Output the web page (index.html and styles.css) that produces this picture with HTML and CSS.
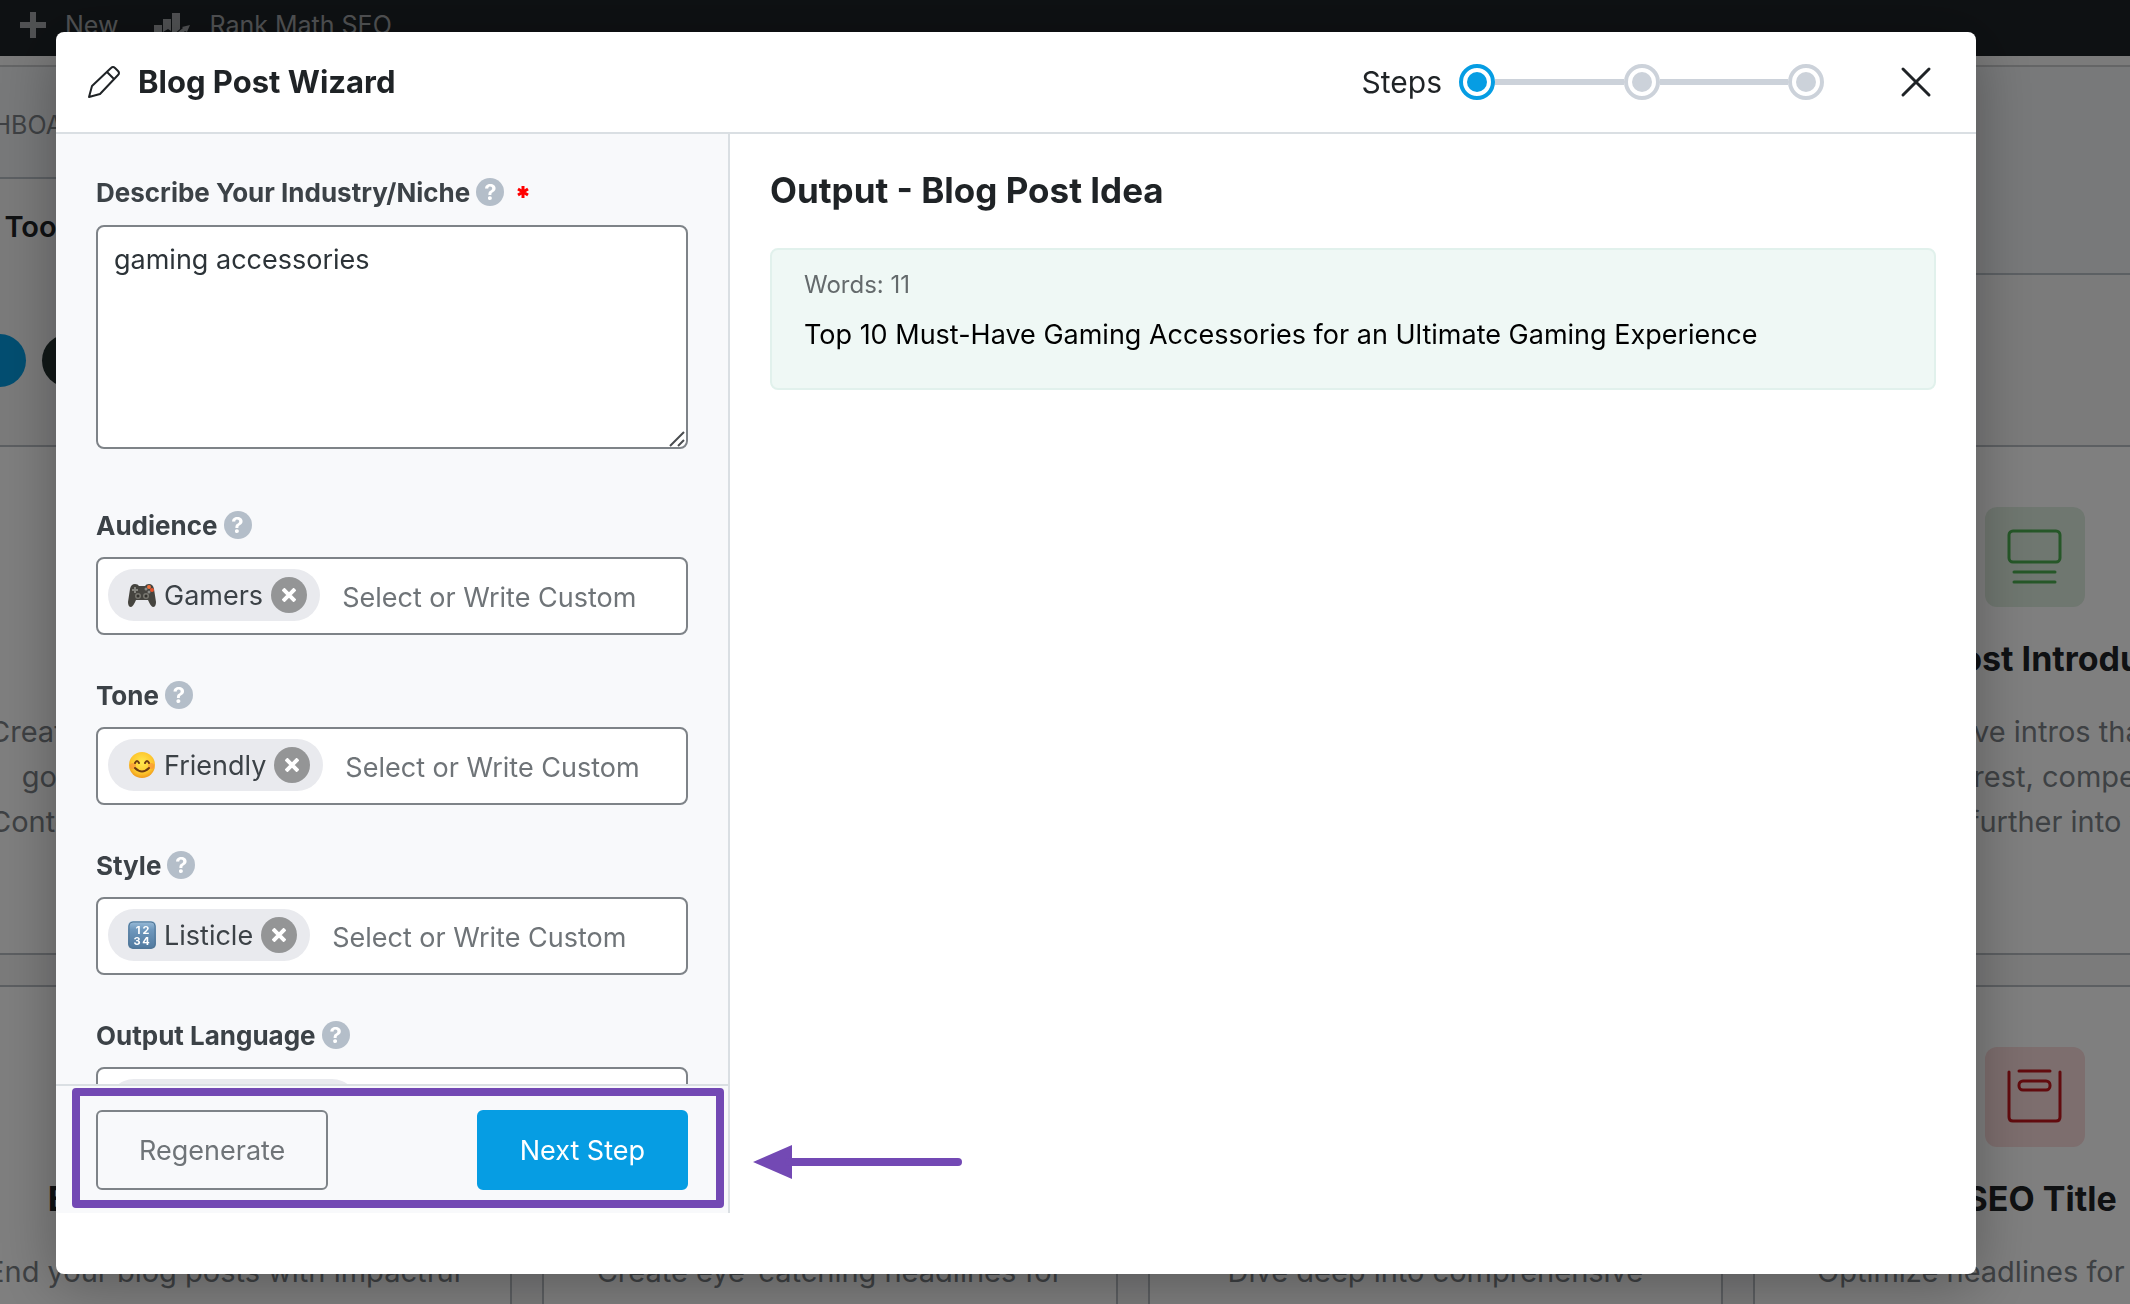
FILE: index.html
```html
<!DOCTYPE html>
<html lang="en">
<head>
<meta charset="utf-8">
<title>Blog Post Wizard</title>
<link rel="stylesheet" href="styles.css">
</head>
<body>
<div class="page">
  <nav class="adminbar">
    <a class="adminbar-link" href="#">
      <svg width="26" height="26" viewBox="0 0 26 26"><path d="M10 0h6v10h10v6H16v10h-6V16H0v-6h10z" fill="#a2a5a8"/></svg>
      New
    </a>
    <a class="adminbar-link" href="#">
      <svg width="36" height="30" viewBox="0 0 36 30"><path d="M0 15h8v7l-5 4H0zM9 9h8v12l-3-2-5 3zM18 3h8v16l-8 7zM28 17l8-2-3 7-2-1-10 9H0v-3h18l11-9z" fill="#a2a5a8"/></svg>
      Rank Math SEO
    </a>
  </nav>
  <header class="masthead">
    <div class="masthead-main">
      <nav class="tabs"><a class="tab" href="#">DASHBOARD</a></nav>
      <div class="toolbar">
        <h2 class="toolbar-title">AI Tools</h2>
        <div class="filters">
          <button class="filter filter-on" type="button">All</button>
          <button class="filter" type="button">SEO</button>
        </div>
      </div>
    </div>
    <div class="masthead-side"></div>
  </header>
  <main class="cards">
    <article class="card">
      <div class="card-icon"></div>
      <h3 class="card-title">Blog Post</h3>
      <p class="card-text">Create complete blog posts in one<br>go. Share a few details so the<br>Content Wizard can do the writing</p>
    </article>
    <article class="card"></article>
    <article class="card"></article>
    <article class="card">
      <div class="card-icon card-icon-green">
        <svg width="56" height="56" viewBox="0 0 56 56" fill="none" stroke="#4caf50" stroke-width="3" stroke-linecap="round"><rect x="2" y="2" width="51" height="31" rx="4"/><path d="M7 43h41M7 53h41"/></svg>
      </div>
      <h3 class="card-title">Blog Post Introduction</h3>
      <p class="card-text">Attractive intros that win<br>any interest, compelling it<br>them further into your</p>
    </article>
    <article class="card">
      <div class="card-icon"></div>
      <h3 class="card-title">Blog Post Conclusion</h3>
      <p class="card-text">End your blog posts with impactful</p>
    </article>
    <article class="card">
      <div class="card-icon"></div>
      <h3 class="card-title">Post Title</h3>
      <p class="card-text">Create eye-catching headlines for</p>
    </article>
    <article class="card">
      <div class="card-icon"></div>
      <h3 class="card-title">Topic Research</h3>
      <p class="card-text">Dive deep into comprehensive</p>
    </article>
    <article class="card">
      <div class="card-icon card-icon-red">
        <svg width="56" height="56" viewBox="0 0 56 56" fill="none" stroke="#c4161c" stroke-width="3" stroke-linecap="round"><path d="M2 3v45q0 4 4 4h43q4 0 4-4V3M12 2h31"/><rect x="12" y="12" width="31" height="9" rx="4"/></svg>
      </div>
      <h3 class="card-title">SEO Title</h3>
      <p class="card-text">Optimize headlines for maximum</p>
    </article>
  </main>
</div>

<div class="overlay">
  <section class="modal" role="dialog" aria-labelledby="modal-title">
    <header class="modal-header">
      <svg class="pencil" width="34" height="34" viewBox="0 0 34 34" fill="none" stroke="#1f2326" stroke-width="2" stroke-linejoin="round"><path d="M2 32l3-11L24 3q2-2 4 0l3 3q2 2 0 4L13 29zM20 7l7 7"/></svg>
      <h1 class="modal-title" id="modal-title">Blog Post Wizard</h1>
      <span class="steps-label">Steps</span>
      <div class="steps">
        <span class="step step-on"></span><span class="step-line"></span><span class="step"></span><span class="step-line"></span><span class="step"></span>
      </div>
      <button class="close" type="button" aria-label="Close">
        <svg width="32" height="32" viewBox="0 0 32 32" stroke="#1f2326" stroke-width="3" stroke-linecap="round"><path d="M3 3l26 26M29 3L3 29"/></svg>
      </button>
    </header>
    <div class="modal-body">
      <form class="sidebar">
        <div class="fields">
          <div class="field field-long">
            <div class="field-head"><label for="niche">Describe Your Industry/Niche</label><span class="help">?</span><svg class="required" width="12" height="12" viewBox="0 0 12 12" stroke="#f00" stroke-width="3"><path d="M6 0v12M1 3l10 6M11 3L1 9"/></svg></div>
            <div class="area-wrap">
              <textarea class="area" id="niche">gaming accessories</textarea>
              <svg class="grip" width="16" height="16" viewBox="0 0 16 16" stroke="#4a4d50" stroke-width="2"><path d="M1 15L15 1M9 15l6-6"/></svg>
            </div>
          </div>
          <div class="field">
            <div class="field-head"><label for="audience">Audience</label><span class="help">?</span></div>
            <div class="picker">
              <span class="chip">
                <svg width="28" height="28" viewBox="0 0 28 28"><path d="M7 3Q10 3 11 5h6q1-2 4-2 4 0 5 5l2 13q0 5-3 5-2 0-5-7H8q-3 7-5 7-3 0-3-5L2 8q1-5 5-5z" fill="#45443f"/><path d="M7 6v6M4 9h6" stroke="#85857f" stroke-width="2"/><circle cx="10" cy="15" r="3" fill="#77766f"/><circle cx="18" cy="15" r="3" fill="#77766f"/><circle cx="10" cy="15" r="1.500" fill="#33322e"/><circle cx="18" cy="15" r="1.500" fill="#33322e"/><circle cx="21" cy="6" r="2" fill="#f0703a"/><circle cx="24" cy="9" r="2" fill="#e5532d"/><circle cx="21" cy="11" r="1.500" fill="#8a8a86"/><circle cx="18" cy="8" r="1.500" fill="#8a8a86"/></svg>
                Gamers
                <button class="chip-x" type="button" aria-label="Remove Gamers"><svg width="14" height="14" viewBox="0 0 14 14"><path d="M1 1l12 12M13 1L1 13" stroke="#fff" stroke-width="4"/></svg></button>
              </span>
              <input class="picker-input" id="audience" type="text" placeholder="Select or Write Custom">
            </div>
          </div>
          <div class="field">
            <div class="field-head"><label for="tone">Tone</label><span class="help">?</span></div>
            <div class="picker">
              <span class="chip">
                <svg width="28" height="28" viewBox="0 0 28 28"><defs><radialGradient id="face" cx=".5" cy=".4" r=".6"><stop offset="0" stop-color="#ffe94e"/><stop offset=".7" stop-color="#fdc62d"/><stop offset="1" stop-color="#f09a1c"/></radialGradient></defs><circle cx="14" cy="14" r="13" fill="url(#face)"/><circle cx="5" cy="15" r="3" fill="#f9823b" opacity=".5"/><circle cx="23" cy="15" r="3" fill="#f9823b" opacity=".5"/><path d="M7 12q2-4 4 0M17 12q2-4 4 0M7 17q7 7 14 0" fill="none" stroke="#6d3a12" stroke-width="2" stroke-linecap="round"/></svg>
                Friendly
                <button class="chip-x" type="button" aria-label="Remove Friendly"><svg width="14" height="14" viewBox="0 0 14 14"><path d="M1 1l12 12M13 1L1 13" stroke="#fff" stroke-width="4"/></svg></button>
              </span>
              <input class="picker-input" id="tone" type="text" placeholder="Select or Write Custom">
            </div>
          </div>
          <div class="field">
            <div class="field-head"><label for="style">Style</label><span class="help">?</span></div>
            <div class="picker">
              <span class="chip">
                <svg class="numbers" width="28" height="28" viewBox="0 0 28 28"><defs><linearGradient id="tile" x2="0" y2="1"><stop offset="0" stop-color="#9dbfdb"/><stop offset=".3" stop-color="#6f98bd"/><stop offset="1" stop-color="#4f789e"/></linearGradient></defs><rect width="28" height="28" rx="5" fill="url(#tile)"/><rect x="1" y="1" width="26" height="26" rx="4" fill="none" stroke="#527796" stroke-width="1"/><text x="10" y="13">1</text><text x="18" y="13">2</text><text x="9" y="24">3</text><text x="18" y="24">4</text></svg>
                Listicle
                <button class="chip-x" type="button" aria-label="Remove Listicle"><svg width="14" height="14" viewBox="0 0 14 14"><path d="M1 1l12 12M13 1L1 13" stroke="#fff" stroke-width="4"/></svg></button>
              </span>
              <input class="picker-input" id="style" type="text" placeholder="Select or Write Custom">
            </div>
          </div>
          <div class="field">
            <div class="field-head"><label for="language">Output Language</label><span class="help">?</span></div>
            <div class="picker">
              <span class="chip">
                <svg width="28" height="28" viewBox="0 0 28 28"><rect y="5" width="28" height="18" fill="#c8444c"/><rect y="5" width="13" height="10" fill="#3c4f8a"/></svg>
                US English
                <button class="chip-x" type="button" aria-label="Remove US English"></button>
              </span>
              <input class="picker-input" id="language" type="text">
            </div>
          </div>
        </div>
        <footer class="actions">
          <button class="btn btn-outline" type="button">Regenerate</button>
          <button class="btn btn-primary" type="button">Next Step</button>
          <div class="highlight"></div>
          <svg class="arrow" width="210" height="34" viewBox="0 0 210 34"><path d="M0 17L39 0v34z" fill="#7349b4"/><path d="M36 17h169" stroke="#7349b4" stroke-width="8" stroke-linecap="round"/></svg>
        </footer>
      </form>
      <section class="output">
        <h2 class="output-title">Output - Blog Post Idea</h2>
        <div class="result">
          <p class="result-words">Words: 11</p>
          <p class="result-text">Top 10 Must-Have Gaming Accessories for an Ultimate Gaming Experience</p>
        </div>
      </section>
    </div>
  </section>
</div>
</body>
</html>
```
FILE: styles.css
```css
* { box-sizing: border-box; }
html, body { height: 100%; }
body {
  margin: 0;
  overflow: hidden;
  font-family: Inter, "Liberation Sans", sans-serif;
  color: #1f2326;
  background: #f6f6f7;
}
h1, h2, h3, p { margin: 0; }
button, input, textarea { font-family: inherit; }
svg { display: block; flex: none; }

/* Page behind the dialog; it runs past both sides of the window */
.page { margin: 0 -199px 0 -64px; }
.adminbar {
  display: flex;
  gap: 36px;
  height: 56px;
  padding: 6px 84px;
  background: #1d2327;
}
.adminbar-link {
  display: flex;
  gap: 19px;
  align-items: center;
  height: 38px;
  font-size: 25px;
  color: #a2a5a8;
  text-decoration: none;
}
.masthead {
  display: flex;
  height: 389px;
  padding-top: 9px;
}
.masthead-main { width: 50%; border-top: 2px solid #c9cbcd; }
.masthead-side {
  flex: 1;
  height: 210px;
  border-top: 2px solid #c9cbcd;
  border-bottom: 2px solid #b9c0c7;
  background: #f0f2f4;
}
.tabs {
  height: 112px;
  padding: 40px 0 0 6px;
  border-bottom: 2px solid #b9c0c7;
  background: #f0f2f4;
}
.tab { font-size: 25px; line-height: 36px; color: #7d8388; text-decoration: none; }
.toolbar { padding: 28px 0 0 32px; }
.toolbar-title { font-size: 29px; font-weight: 600; line-height: 40px; }
.filters { display: flex; gap: 16px; padding-top: 87px; }
.filter {
  width: 120px;
  height: 53px;
  border: 0;
  border-radius: 27px;
  font-size: 24px;
  color: #fff;
  background: #23302f;
}
.filter-on { width: 58px; padding: 0 28px 0 0; background: #069de3; }

.cards {
  display: grid;
  grid-template-columns: repeat(4, 1fr);
  grid-auto-rows: 510px;
  gap: 30px;
}
.card {
  padding: 60px 20px 0;
  border: 2px solid #b9bec4;
  background: #fff;
  text-align: center;
}
.card-icon {
  display: flex;
  align-items: center;
  justify-content: center;
  width: 112px;
  height: 100px;
  margin: 0 auto;
  border-right: 12px solid #fff;
}
.card-icon svg {
  box-sizing: content-box;
  padding: 22px;
  border-radius: 12px;
}
.card-icon-green svg { background: #dfeee0; }
.card-icon-red svg { background: #fbdcdc; }
.card-title { margin-top: 30px; font-size: 34px; font-weight: 650; line-height: 44px; }
.card-text { margin-top: 28px; font-size: 29px; line-height: 45px; color: #7d8388; }

/* Dialog */
.overlay {
  position: fixed;
  inset: 0;
  display: flex;
  padding: 32px 154px 30px 56px;
  background: rgba(0, 0, 0, .5);
}
.modal {
  flex: 1;
  display: flex;
  flex-direction: column;
  min-width: 0;
  padding-bottom: 61px;
  border-radius: 8px;
  background: #fff;
  box-shadow: 0 10px 60px rgba(0, 0, 0, .3);
}
.modal-header {
  display: flex;
  align-items: center;
  height: 102px;
  padding: 0 44px 0 31px;
  border-bottom: 2px solid #dadfe3;
}
.modal-title { margin-left: 17px; font-size: 31px; font-weight: 650; line-height: 40px; }
.steps-label { margin-left: auto; font-size: 30px; line-height: 40px; }
.steps { display: flex; align-items: center; width: 365px; margin: 0 76px 0 17px; }
.step {
  width: 36px;
  height: 36px;
  border: 4px solid #ccd2da;
  border-radius: 50%;
  background: #ccd2da content-box;
  padding: 4px;
}
.step-on { border-color: #069de3; background-color: #069de3; }
.step-line { flex: 1; height: 6px; background: #ccd2da; }
.close { padding: 0; border: 0; background: none; }

.modal-body { flex: 1; display: flex; min-height: 0; }
.sidebar {
  flex: none;
  display: flex;
  flex-direction: column;
  width: 674px;
  border-right: 2px solid #dadfe3;
  background: #f8f9fb;
}
.fields { flex: 1; min-height: 0; overflow: hidden; padding: 40px 40px 0; }
.field { padding-bottom: 42px; }
.field-long { padding-bottom: 58px; }
.field-long .field-head { margin-bottom: 15px; }
.field-head {
  display: flex;
  align-items: center;
  height: 36px;
  margin-bottom: 14px;
  font-size: 26px;
  font-weight: 650;
  color: #3c4247;
}
.help {
  width: 28px;
  height: 28px;
  margin-left: 6px;
  border-radius: 50%;
  font-size: 22px;
  font-weight: 700;
  line-height: 28px;
  text-align: center;
  color: #fff;
  background: #b4bec9;
}
.required { margin-left: 13px; }
.area-wrap { position: relative; }
.area {
  display: block;
  width: 100%;
  height: 224px;
  padding: 15px 16px;
  border: 2px solid #7e8388;
  border-radius: 8px;
  font-size: 27px;
  line-height: 36px;
  color: #2c3338;
  background: #fff;
  resize: none;
}
.grip { position: absolute; right: 3px; bottom: 2px; }
.picker {
  display: flex;
  align-items: flex-start;
  height: 78px;
  padding: 10px;
  border: 2px solid #7e8388;
  border-radius: 8px;
  background: #fff;
}
.chip {
  display: flex;
  align-items: center;
  gap: 8px;
  height: 52px;
  padding: 0 13px 0 20px;
  border-radius: 26px;
  font-size: 27px;
  color: #3c4247;
  background: #e9eaee;
  white-space: nowrap;
}
.chip-x {
  display: flex;
  align-items: center;
  justify-content: center;
  width: 36px;
  height: 36px;
  padding: 0;
  border: 0;
  border-radius: 50%;
  background: #949596;
}
.numbers text { font-size: 11px; font-weight: 700; text-anchor: middle; fill: #fff; }
.picker-input {
  flex: 1;
  min-width: 0;
  height: 56px;
  padding: 0 0 0 22px;
  border: 0;
  font-size: 27px;
  background: none;
}
.picker-input::placeholder { color: #6f7478; opacity: 1; }

.actions {
  position: relative;
  display: flex;
  justify-content: space-between;
  height: 129px;
  padding: 24px 40px;
  border-top: 2px solid #dadfe3;
}
.btn { height: 80px; padding: 0 41px; border: 2px solid; border-radius: 6px; font-size: 27px; }
.btn-outline { border-color: #7e8388; color: #6f7478; background: none; }
.btn-primary { border-color: #069de3; color: #fff; background: #069de3; }
.highlight {
  position: absolute;
  inset: 2px 4px 5px 16px;
  border: 8px solid #7349b4;
  border-radius: 4px;
  pointer-events: none;
}
.arrow { position: absolute; top: 59px; left: calc(100% + 25px); }

.output { flex: 1; min-width: 0; padding: 35px 40px; }
.output-title { font-size: 35px; font-weight: 650; line-height: 42px; }
.result {
  margin-top: 37px;
  padding: 19px 32px 35px;
  border: 2px solid #e1f1ec;
  border-radius: 8px;
  background: #eff8f5;
}
.result-words { font-size: 24px; line-height: 32px; color: #646a6c; }
.result-text { margin-top: 16px; font-size: 27px; line-height: 36px; color: #000; }
```
